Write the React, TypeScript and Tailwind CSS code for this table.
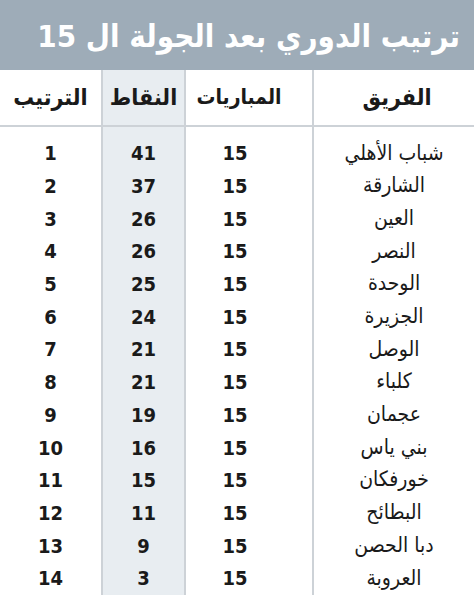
const rows = [
  { team: 'شباب الأهلي', played: 15, points: 41, rank: 1 },
  { team: 'الشارقة', played: 15, points: 37, rank: 2 },
  { team: 'العين', played: 15, points: 26, rank: 3 },
  { team: 'النصر', played: 15, points: 26, rank: 4 },
  { team: 'الوحدة', played: 15, points: 25, rank: 5 },
  { team: 'الجزيرة', played: 15, points: 24, rank: 6 },
  { team: 'الوصل', played: 15, points: 21, rank: 7 },
  { team: 'كلباء', played: 15, points: 21, rank: 8 },
  { team: 'عجمان', played: 15, points: 19, rank: 9 },
  { team: 'بني ياس', played: 15, points: 16, rank: 10 },
  { team: 'خورفكان', played: 15, points: 15, rank: 11 },
  { team: 'البطائح', played: 15, points: 11, rank: 12 },
  { team: 'دبا الحصن', played: 15, points: 9, rank: 13 },
  { team: 'العروبة', played: 15, points: 3, rank: 14 },
];

function Column({
  title,
  values,
  className,
  headClass,
  cellClass,
}: {
  title: string;
  values: Array<string | number>;
  className: string;
  headClass: string;
  cellClass: string;
}) {
  return (
    <div className={`flex flex-col ${className}`}>
      <div
        className={`flex h-[57px] items-center justify-center border-b-2 border-[#cdd2d7] font-bold text-[#1a1a1a] ${headClass}`}
      >
        {title}
      </div>
      <div className="flex flex-col pt-[10px]">
        {values.map((v, i) => (
          <div key={i} className={`flex h-[32.7px] items-center justify-center text-[#1a1a1a] ${cellClass}`}>
            {v}
          </div>
        ))}
      </div>
    </div>
  );
}

export default function App() {
  return (
    <div
      dir="rtl"
      className="h-[600px] w-[474px] overflow-hidden bg-white font-['DejaVu_Sans_Condensed','DejaVu_Sans',sans-serif]"
    >
      <div className="flex h-[70px] items-center whitespace-nowrap bg-[#9eacb8] pr-[14px] pt-[2px] text-[31px] font-bold text-white">
        ترتيب الدوري بعد الجولة ال 15
      </div>
      <div className="flex">
        <Column
          title="الفريق"
          values={rows.map((r) => r.team)}
          className="w-[162px] border-l-2 border-[#cdd2d7]"
          headClass="pl-[6px] text-[23px]"
          cellClass="text-[21px]"
        />
        <Column
          title="المباريات"
          values={rows.map((r) => r.played)}
          className="w-[128px] border-l-2 border-[#cdd2d7]"
          headClass="pr-[20px] text-[21px]"
          cellClass="pr-[28px] text-[20px] font-bold"
        />
        <Column
          title="النقاط"
          values={rows.map((r) => r.points)}
          className="w-[83px] border-l-2 border-[#cdd2d7] bg-[#e8edf1]"
          headClass="text-[23px]"
          cellClass="text-[20px] font-bold"
        />
        <Column
          title="الترتيب"
          values={rows.map((r) => r.rank)}
          className="flex-1"
          headClass="text-[23px]"
          cellClass="text-[20px] font-bold"
        />
      </div>
    </div>
  );
}
